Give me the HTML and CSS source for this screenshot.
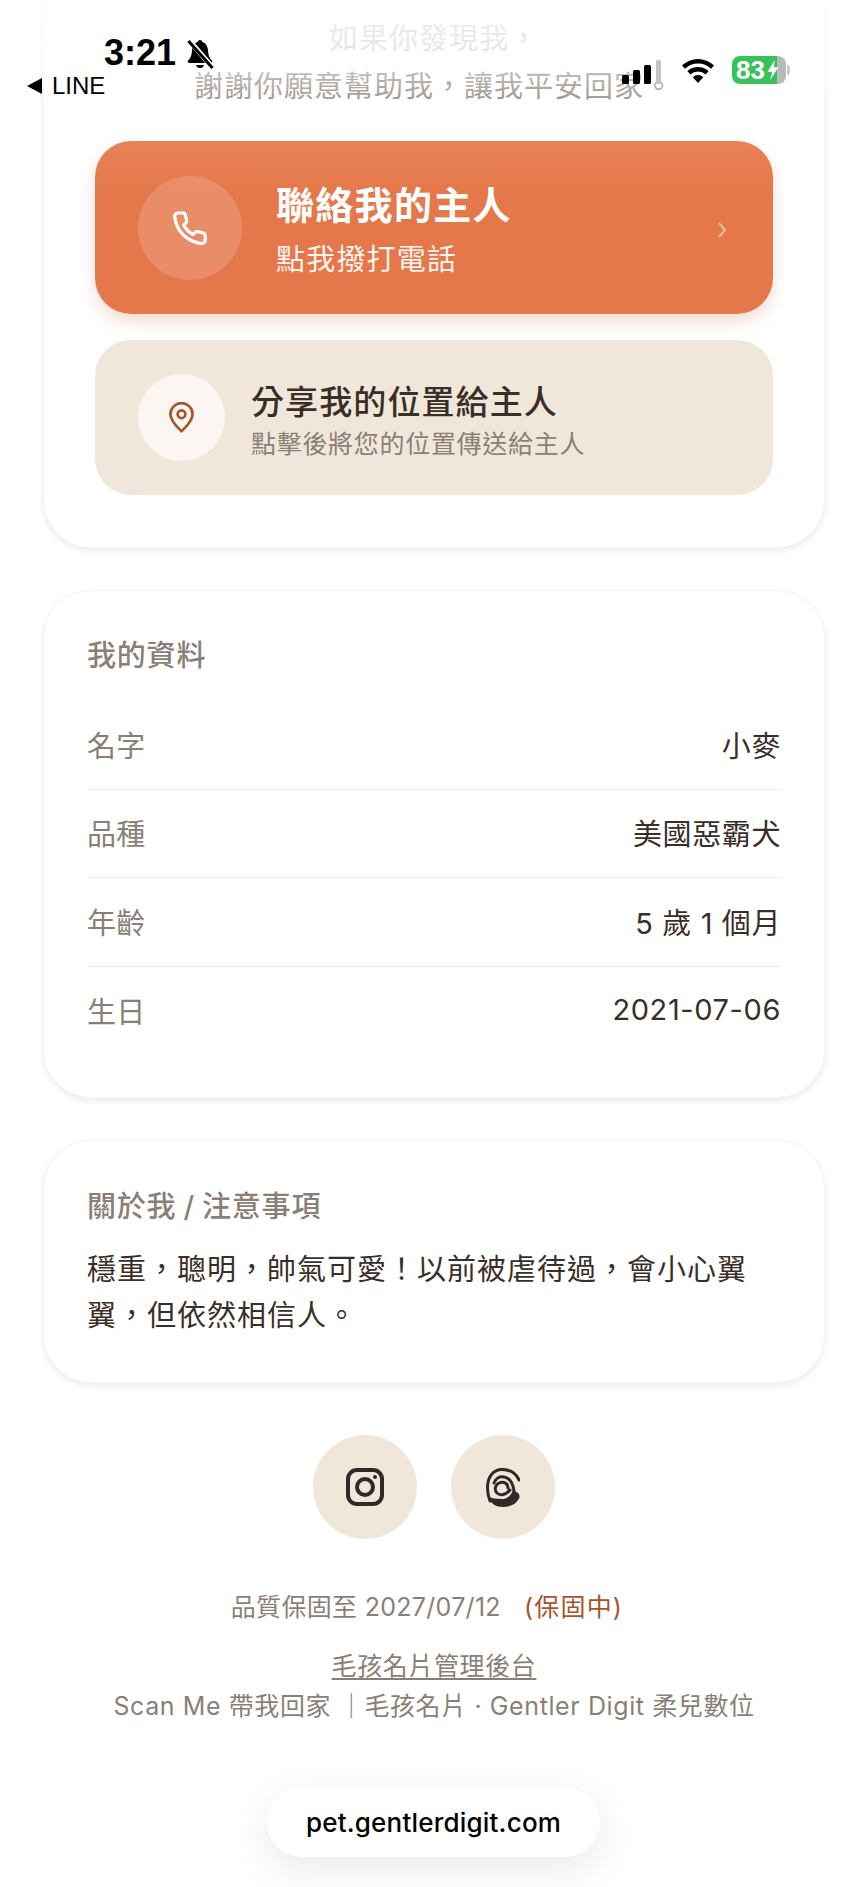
FILE: index.html
```html
<!DOCTYPE html>
<html lang="zh-Hant">
<head>
<meta charset="utf-8">
<title>小麥 - 毛孩名片</title>
<link rel="stylesheet" href="styles.css">
</head>
<body>
<div class="status-fade"></div>
<div class="status-bar">
  <span class="clock">3:21</span>
  <svg class="bell" viewBox="0 0 30 32" aria-hidden="true">
    <path d="M15 2c-1.400 0-2.200.9-2.300 2C8.800 5.200 7.200 8.600 7 12.500c-.2 4.500-1.300 7.300-3.800 10-.9 1-.4 2.500 1.100 2.500h21.400c1.500 0 2-1.500 1.100-2.500-2.500-2.700-3.600-5.500-3.800-10-.2-3.900-1.800-7.300-5.700-8.500C17.200 2.900 16.400 2 15 2z"/>
    <path d="M11 27c.4 2 2 3 4 3s3.600-1 4-3z"/>
    <path class="bell-slash-gap" d="M3 1l25 29"/>
    <path class="bell-slash" d="M3.500 3l24 27"/>
  </svg>
  <span class="back-link"><span class="back-arrow"></span>LINE</span>
  <div class="status-right">
    <svg class="signal" viewBox="0 0 43 24" aria-hidden="true">
      <rect x="0" y="15" width="7" height="9" rx="1.500"/>
      <rect x="11" y="10" width="7" height="14" rx="1.500"/>
      <rect x="22" y="5" width="7" height="19" rx="1.500"/>
      <rect class="signal-off" x="34" y="0" width="5" height="24" rx="1.500"/>
    </svg>
    <svg class="wifi" viewBox="0 0 36 26" aria-hidden="true">
      <path d="M18 26l-5.200-5.800a7.500 7.500 0 0 1 10.400 0z"/>
      <path d="M10.400 17.500a11 11 0 0 1 15.200 0l3-3.300a15.500 15.500 0 0 0-21.200 0z"/>
      <path d="M5 11.700a19 19 0 0 1 26 0l3-3.300a23.500 23.500 0 0 0-32 0z"/>
    </svg>
    <div class="battery">
      <span class="battery-level">83</span>
      <svg class="bolt" viewBox="0 0 12 22" aria-hidden="true"><path d="M8 0L0 13h5l-2 9 9-14H7z"/></svg>
    </div>
  </div>
</div>

<main class="page">
  <section class="card card-contact">
    <p class="plea"><span class="plea-faint">如果你發現我，</span><br>謝謝你願意幫助我，讓我平安回家。</p>
    <a class="action action-call">
      <span class="action-icon action-icon-call">
        <svg viewBox="0 0 24 24" aria-hidden="true"><path d="M4.500 2.500h2.700a2 2 0 0 1 2 1.700c.1.9.3 1.700.6 2.500a2 2 0 0 1-.4 2L8 10.100a14 14 0 0 0 5.900 6l1.300-1.300a2 2 0 0 1 2.100-.4c.8.3 1.700.5 2.600.6a2 2 0 0 1 1.700 2v2.600a2.200 2.200 0 0 1-2.300 2.200c-3-.3-5.900-1.300-8.400-2.900a18.500 18.500 0 0 1-5.700-5.700C3.600 10.700 2.600 7.800 2.300 4.700a2.200 2.200 0 0 1 2.200-2.200z"/></svg>
      </span>
      <span class="action-text call-text">
        <strong class="call-title">聯絡我的主人</strong>
        <small class="call-sub">點我撥打電話</small>
      </span>
      <svg class="chevron" viewBox="0 0 10 18" aria-hidden="true"><path d="M2 2l6 7-6 7"/></svg>
    </a>
    <a class="action action-share">
      <span class="action-icon action-icon-share">
        <svg viewBox="0 0 24 28" aria-hidden="true"><path d="M12 26.500C8 22.500 2 17 2 11a10 10 0 0 1 20 0c0 6-6 11.500-10 15.500z"/><circle cx="12" cy="11" r="3.500"/></svg>
      </span>
      <span class="action-text share-text">
        <strong class="share-title">分享我的位置給主人</strong>
        <small class="share-sub">點擊後將您的位置傳送給主人</small>
      </span>
    </a>
  </section>

  <section class="card card-info">
    <h2 class="card-title">我的資料</h2>
    <dl class="facts">
      <div class="fact"><dt>名字</dt><dd>小麥</dd></div>
      <div class="fact"><dt>品種</dt><dd>美國惡霸犬</dd></div>
      <div class="fact"><dt>年齡</dt><dd>5 歲 1 個月</dd></div>
      <div class="fact"><dt>生日</dt><dd>2021-07-06</dd></div>
    </dl>
  </section>

  <section class="card card-about">
    <h2 class="card-title">關於我 / 注意事項</h2>
    <p class="about-text">穩重，聰明，帥氣可愛！以前被虐待過，會小心翼翼，但依然相信人。</p>
  </section>

  <nav class="social">
    <a class="social-link">
      <svg class="icon-instagram" viewBox="0 0 38 38" aria-hidden="true">
        <rect x="2" y="2" width="34" height="34" rx="9"/>
        <circle cx="19" cy="19" r="8"/>
        <circle class="dot" cx="29" cy="9" r="2"/>
      </svg>
    </a>
    <a class="social-link">
      <svg class="icon-threads" viewBox="0 0 34 39" aria-hidden="true">
        <path class="blob" d="M2 29c4 1 8 2 13 2 6 0 10-3 12-9l5 3c2 2 2 5 0 7-3 5-9 7-15 7-7 0-12-3-15-10z"/>
        <path d="M33 12C30 5 24 1.500 16 1.500 7 1.500 1.500 9 1.500 20c0 5 1 9 2.500 13"/>
        <path d="M8 15c2-5 6-7 10-6 6 1 9 7 10 14"/>
        <path d="M22 20c0-5-5-7-9-5-4 2-5 7-2 10 3 3 9 2 13-3"/>
      </svg>
    </a>
  </nav>

  <footer class="foot">
    <p class="warranty">品質保固至 2027/07/12<span class="warranty-state">(保固中)</span></p>
    <a class="admin-link">毛孩名片管理後台</a>
    <p class="credit">Scan Me 帶我回家 ｜毛孩名片 · Gentler Digit 柔兒數位</p>
  </footer>
</main>

<div class="url-pill">pet.gentlerdigit.com</div>
</body>
</html>
```
FILE: styles.css
```css
* {
  box-sizing: border-box;
}

html,
body {
  margin: 0;
  padding: 0;
}

body {
  position: relative;
  width: 868px;
  height: 1887px;
  overflow: hidden;
  background: #fff;
  color: #3a2f28;
  font-family: Inter, "Noto Sans CJK TC", sans-serif;
}

/* Phone status bar, laid over the scrolled page */
.status-fade {
  position: absolute;
  top: 0;
  left: 0;
  right: 0;
  height: 120px;
  z-index: 2;
  background: linear-gradient(to bottom, rgba(255, 255, 255, 0.8) 0, rgba(255, 255, 255, 0.55) 55%, rgba(255, 255, 255, 0) 100%);
}

.status-bar {
  position: absolute;
  top: 0;
  left: 0;
  right: 0;
  height: 110px;
  z-index: 3;
  color: #000;
}

.clock {
  position: absolute;
  left: 104px;
  top: 32px;
  font-family: "Liberation Sans", sans-serif;
  font-size: 36px;
  line-height: 42px;
  font-weight: 700;
}

.bell {
  position: absolute;
  left: 185px;
  top: 38px;
  width: 30px;
  height: 32px;
  fill: #000;
}

.bell-slash-gap {
  stroke: #fff;
  stroke-width: 5;
}

.bell-slash {
  stroke: #000;
  stroke-width: 3;
}

.back-link {
  position: absolute;
  left: 27px;
  top: 72px;
  display: flex;
  align-items: center;
  gap: 10px;
  font-family: "Liberation Sans", sans-serif;
  font-size: 24px;
  line-height: 28px;
}

.back-arrow {
  width: 0;
  height: 0;
  border-style: solid;
  border-width: 8px 15px 8px 0;
  border-color: transparent #000 transparent transparent;
}

.status-right {
  position: absolute;
  left: 622px;
  top: 56px;
  display: flex;
  align-items: center;
  gap: 15px;
}

.signal {
  width: 43px;
  height: 24px;
  margin-top: 4px;
  fill: #000;
}

.signal-off {
  fill: #c4c4c4;
}

.wifi {
  width: 36px;
  height: 26px;
  fill: #000;
}

.battery {
  position: relative;
  display: flex;
  align-items: center;
  width: 54px;
  height: 28px;
  margin-left: 1px;
  padding-left: 4px;
  border-radius: 8px;
  background: linear-gradient(to right, #38c25c 0, #38c25c 84%, #b9b9b9 84%);
  color: #fff;
  font-family: "Liberation Sans", sans-serif;
  font-size: 26px;
  font-weight: 700;
  line-height: 28px;
}

/* Battery terminal nub */
.battery::after {
  content: "";
  position: absolute;
  left: 55px;
  top: 9px;
  width: 3px;
  height: 10px;
  border-radius: 0 3px 3px 0;
  background: #c9c9c9;
}

.bolt {
  position: absolute;
  left: 35px;
  top: 4px;
  width: 12px;
  height: 20px;
  fill: #fff;
}

/* Page column */
.page {
  padding: 0 43px;
}

.card {
  border-radius: 48px;
  background: #fff;
  border: 1px solid #f6f5f3;
  box-shadow: 0 3px 6px rgba(60, 40, 25, 0.09);
}

.card-contact {
  margin-top: -40px;
  padding: 54px 51px 52px;
}

.plea {
  margin: 0 0 30px;
  text-align: center;
  color: #8a7f76;
  font-size: 29px;
  line-height: 48px;
  letter-spacing: 1px;
}

.plea-faint {
  color: #c4beb8;
}

.action {
  display: flex;
  align-items: center;
  border-radius: 36px;
}

.action-text {
  display: flex;
  flex-direction: column;
}

.action-text strong,
.action-text small {
  display: block;
}

.call-text {
  padding-top: 3px;
}

.share-text {
  padding-top: 5px;
}

.action-call {
  height: 173px;
  padding: 0 46px 0 43px;
  background: linear-gradient(to bottom, #e98258 0, #e4784a 30%, #e4784a 100%);
  color: #fff;
  box-shadow: 0 8px 16px rgba(200, 100, 55, 0.22);
}

.action-share {
  height: 155px;
  margin-top: 26px;
  padding: 0 43px;
  background: #f1e6da;
}

.action-icon {
  display: flex;
  flex: none;
  align-items: center;
  justify-content: center;
  border-radius: 50%;
}

.action-icon svg {
  fill: none;
  stroke-linecap: round;
  stroke-linejoin: round;
}

.action-icon-call {
  width: 104px;
  height: 104px;
  margin-right: 34px;
  background: rgba(255, 255, 255, 0.16);
}

.action-icon-call svg {
  width: 38px;
  height: 38px;
  stroke: #fff;
  stroke-width: 2;
}

.action-icon-share {
  width: 87px;
  height: 87px;
  margin-right: 26px;
  background: #fbf6f1;
}

.action-icon-share svg {
  width: 27px;
  height: 31px;
  stroke: #a8532a;
  stroke-width: 2.400;
}

.call-title {
  font-size: 38px;
  line-height: 52px;
  font-weight: 700;
  letter-spacing: 1.300px;
}

.call-sub {
  margin-top: 9px;
  font-size: 29px;
  line-height: 40px;
  font-weight: 400;
  letter-spacing: 1.200px;
  opacity: 0.92;
}

.share-title {
  font-size: 33px;
  line-height: 44px;
  font-weight: 500;
  letter-spacing: 1.100px;
  color: #3a2f28;
}

.share-sub {
  margin-top: 3px;
  font-size: 25px;
  line-height: 34px;
  font-weight: 400;
  letter-spacing: 0.700px;
  color: #8a7f76;
}

.chevron {
  width: 10px;
  height: 18px;
  margin-top: 4px;
  margin-left: auto;
  fill: none;
  stroke: rgba(255, 255, 255, 0.6);
  stroke-width: 1.800;
}

.card-info {
  margin-top: 42px;
  height: 508px;
  padding: 45px 43px 0;
}

.card-title {
  margin: 0;
  font-size: 29px;
  line-height: 40px;
  font-weight: 500;
  letter-spacing: 0.800px;
  word-spacing: -1.500px;
  color: #8a7f76;
}

.facts {
  margin: 25px 0 0;
}

.fact {
  display: flex;
  align-items: center;
  justify-content: space-between;
  height: 88.500px;
  padding-bottom: 2px;
  border-bottom: 1px solid #efebe6;
}

.fact:last-child {
  border-bottom: 0;
}

.fact dt {
  font-size: 29px;
  letter-spacing: 0.300px;
  color: #8a7f76;
}

.fact dd {
  margin: 0;
  font-size: 29px;
  letter-spacing: 0.600px;
  color: #3a2f28;
}

.card-about {
  margin-top: 42px;
  height: 243px;
  padding: 46px 43px 0;
}

.about-text {
  margin: 20px 0 0;
  font-size: 29px;
  line-height: 46px;
  letter-spacing: 1px;
  color: #3a2f28;
}

.social {
  display: flex;
  justify-content: center;
  gap: 34px;
  margin-top: 52px;
}

.social-link {
  display: flex;
  align-items: center;
  justify-content: center;
  width: 104px;
  height: 104px;
  border-radius: 50%;
  background: #f1e6da;
}

.social svg {
  fill: none;
  stroke: #2e2a27;
}

.icon-instagram {
  width: 38px;
  height: 38px;
  stroke-width: 4;
}

.icon-instagram .dot {
  fill: #2e2a27;
  stroke: none;
}

.icon-threads {
  width: 34px;
  height: 39px;
  stroke-width: 3;
  stroke-linecap: round;
}

.icon-threads .blob {
  fill: #2e2a27;
  stroke: none;
}

.foot {
  margin-top: 49px;
  text-align: center;
  color: #8a7f76;
  font-size: 25px;
}

.warranty {
  margin: 0;
  padding-right: 14px;
  line-height: 38px;
  letter-spacing: 0.300px;
}

.warranty-state {
  margin-left: 23px;
  letter-spacing: 1.200px;
  color: #a8532a;
}

.admin-link {
  display: inline-block;
  margin-top: 21px;
  line-height: 38px;
  letter-spacing: 0.600px;
  text-decoration: underline;
  text-underline-offset: 3px;
}

.credit {
  margin: 2px 0 0;
  line-height: 38px;
  letter-spacing: 0.600px;
}

/* Browser address pill pinned to the bottom of the viewport */
.url-pill {
  position: absolute;
  left: 267px;
  top: 1788px;
  z-index: 3;
  width: 333px;
  height: 69px;
  border-radius: 35px;
  background: #fff;
  color: #000;
  text-align: center;
  font-family: Inter, sans-serif;
  font-size: 26px;
  font-weight: 500;
  line-height: 69px;
  letter-spacing: 0.200px;
  box-shadow: 0 12px 44px rgba(0, 0, 0, 0.09);
}
```
